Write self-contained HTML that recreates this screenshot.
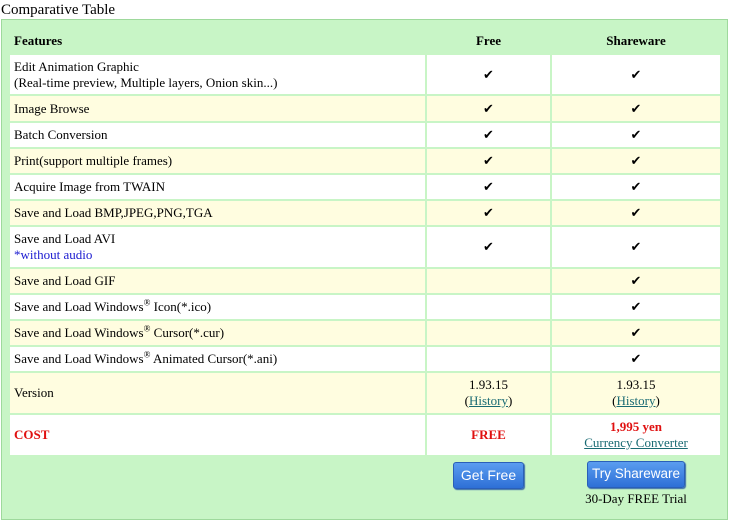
<!DOCTYPE html>
<html><head><style>
body{margin:0;width:730px;height:522px;background:#fff;font-family:"Liberation Serif",serif;font-size:13px;color:#000;position:relative;overflow:hidden}
.title{position:absolute;left:1px;top:2px;font-size:15px}
.box{position:absolute;left:1px;top:19px;width:725px;height:499px;background:#c8f5c6;border:1px solid #9ed99c}
table{position:absolute;left:6px;top:7px;border-spacing:2px;border-collapse:separate}
td{padding:0 4px;font-size:13px;line-height:16px}
td.c{text-align:center}
tr.w td{background:#fff}
tr.y td{background:#fffde0}
tr.h td{background:#c8f5c6;font-weight:bold}
a{color:#1a6b74;text-decoration:underline}
.red{color:#e01010;font-weight:bold}
.btn{position:absolute;background:linear-gradient(#5a9df0,#2e6fd6);border:1px solid #2a5fb8;border-radius:3px;color:#fff;font-family:"Liberation Sans",sans-serif;font-size:14px;text-align:center;line-height:24px;box-shadow:1px 1px 1px #3a6aa8}
sup{font-size:9px;line-height:0}
</style></head><body>
<div class="title">Comparative Table</div>
<div class="box">
<table>
<colgroup><col style="width:415px"><col style="width:123px"><col style="width:168px"></colgroup>
<tr class="h" style="height:24px"><td>Features</td><td class="c">Free</td><td class="c">Shareware</td></tr>
<tr class="w" style="height:39px"><td>Edit Animation Graphic<br>(Real-time preview, Multiple layers, Onion skin...)</td><td class="c">✔</td><td class="c">✔</td></tr>
<tr class="y" style="height:25px"><td>Image Browse</td><td class="c">✔</td><td class="c">✔</td></tr>
<tr class="w" style="height:24px"><td>Batch Conversion</td><td class="c">✔</td><td class="c">✔</td></tr>
<tr class="y" style="height:24px"><td>Print(support multiple frames)</td><td class="c">✔</td><td class="c">✔</td></tr>
<tr class="w" style="height:24px"><td>Acquire Image from TWAIN</td><td class="c">✔</td><td class="c">✔</td></tr>
<tr class="y" style="height:24px"><td>Save and Load BMP,JPEG,PNG,TGA</td><td class="c">✔</td><td class="c">✔</td></tr>
<tr class="w" style="height:40px"><td>Save and Load AVI<br><span style="color:#1a1ad0">*without audio</span></td><td class="c">✔</td><td class="c">✔</td></tr>
<tr class="y" style="height:24px"><td>Save and Load GIF</td><td></td><td class="c">✔</td></tr>
<tr class="w" style="height:24px"><td>Save and Load Windows<sup>®</sup> Icon(*.ico)</td><td></td><td class="c">✔</td></tr>
<tr class="y" style="height:24px"><td>Save and Load Windows<sup>®</sup> Cursor(*.cur)</td><td></td><td class="c">✔</td></tr>
<tr class="w" style="height:24px"><td>Save and Load Windows<sup>®</sup> Animated Cursor(*.ani)</td><td></td><td class="c">✔</td></tr>
<tr class="y" style="height:40px"><td>Version</td><td class="c">1.93.15<br>(<a>History</a>)</td><td class="c">1.93.15<br>(<a>History</a>)</td></tr>
<tr class="w" style="height:40px"><td class="red">COST</td><td class="c red">FREE</td><td class="c"><span class="red">1,995 yen</span><br><a>Currency Converter</a></td></tr>
</table>
</div>
<div class="btn" style="left:453px;top:462px;width:69px;height:25px">Get Free</div>
<div class="btn" style="left:587px;top:461px;width:96px;height:25px;font-size:13.5px">Try Shareware</div>
<div style="position:absolute;left:570px;top:491px;width:132px;text-align:center;white-space:nowrap">30-Day FREE Trial</div>
</body></html>
